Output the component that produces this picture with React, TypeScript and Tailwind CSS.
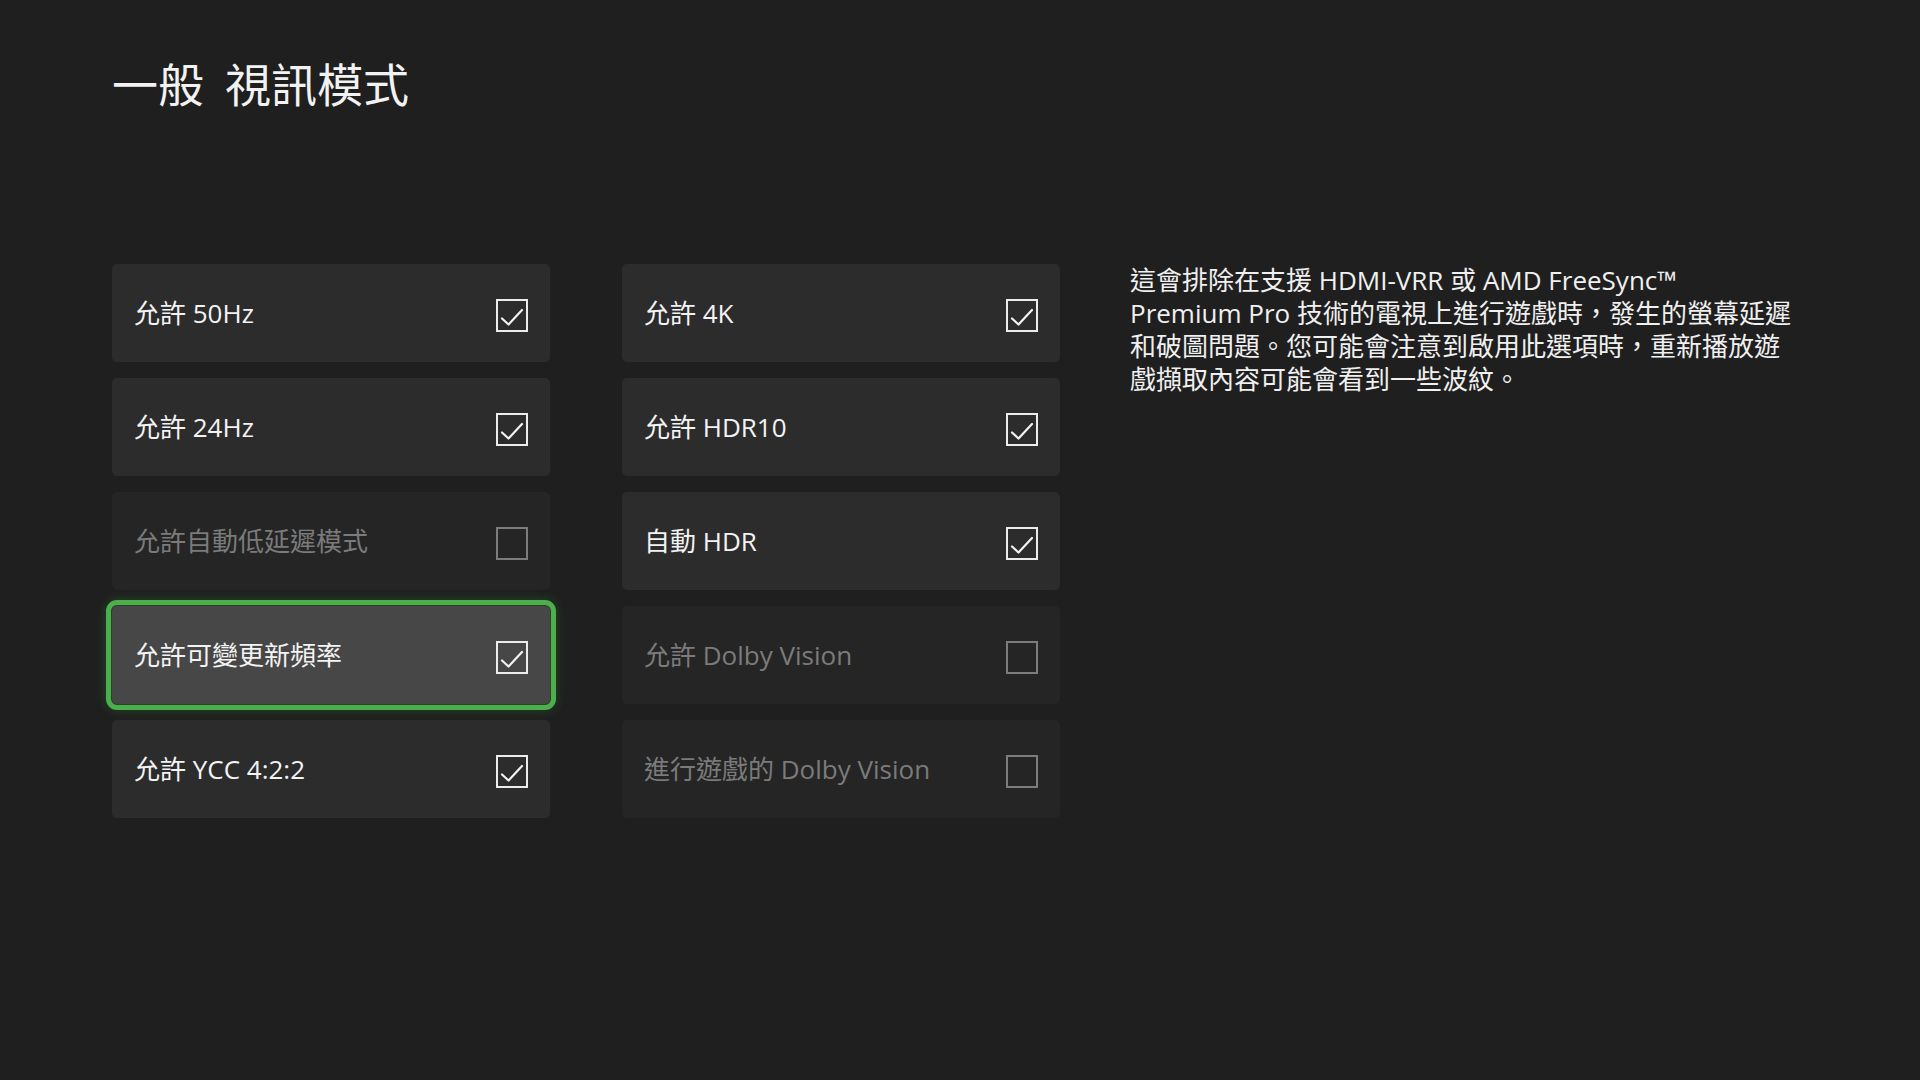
import React from 'react';

type Option = {
  label: string;
  checked: boolean;
  disabled?: boolean;
  focused?: boolean;
};

const LEFT: Option[] = [
  { label: '允許 50Hz', checked: true },
  { label: '允許 24Hz', checked: true },
  { label: '允許自動低延遲模式', checked: false, disabled: true },
  { label: '允許可變更新頻率', checked: true, focused: true },
  { label: '允許 YCC 4:2:2', checked: true },
];

const RIGHT: Option[] = [
  { label: '允許 4K', checked: true },
  { label: '允許 HDR10', checked: true },
  { label: '自動 HDR', checked: true },
  { label: '允許 Dolby Vision', checked: false, disabled: true },
  { label: '進行遊戲的 Dolby Vision', checked: false, disabled: true },
];

// description wraps exactly as on the console
const DESC_LINES = [
  '這會排除在支援 HDMI-VRR 或 AMD FreeSync™',
  'Premium Pro 技術的電視上進行遊戲時，發生的螢幕延遲',
  '和破圖問題。您可能會注意到啟用此選項時，重新播放遊',
  '戲擷取內容可能會看到一些波紋。',
];

function CheckBox({ checked, disabled }: { checked: boolean; disabled?: boolean }) {
  return (
    <svg width="32" height="33" viewBox="0 0 32 33" className="shrink-0 mt-1" aria-hidden="true">
      <rect
        x="1"
        y="1"
        width="30"
        height="31"
        fill="none"
        stroke={disabled ? '#7c7c7c' : '#ececec'}
        strokeWidth="2"
      />
      {checked && (
        <path d="M6 19.5 L12.5 25.5 L26 11" fill="none" stroke="#f2f2f2" strokeWidth="2.2" strokeLinecap="round" strokeLinejoin="round" />
      )}
    </svg>
  );
}

function Tile({ opt }: { opt: Option }) {
  const bg = opt.focused ? 'bg-[#474747]' : opt.disabled ? 'bg-[#252525]' : 'bg-[#2c2c2c]';
  const ring = opt.focused
    ? 'outline outline-[5px] outline-[#4caf4c] outline-offset-[1px] shadow-[0_0_12px_5px_rgba(50,140,50,0.45)]'
    : '';
  return (
    <div className={`h-[98px] rounded-[5px] flex items-center justify-between pl-[22px] pr-[22px] ${bg} ${ring}`}>
      <span className={`text-[26px] leading-none ${opt.disabled ? 'text-[#7b7b7b]' : 'text-[#f3f3f3]'}`}>
        {opt.label}
      </span>
      <CheckBox checked={opt.checked} disabled={opt.disabled} />
    </div>
  );
}

export default function App() {
  return (
    <div
      className="w-[1920px] h-[1080px] bg-[#1f1f1f] text-white overflow-hidden pl-[112px]"
      style={{ fontFamily: '"Open Sans", "Noto Sans CJK TC", sans-serif' }}
    >
      <h1 className="pt-[61px] text-[46px] leading-[46px] font-normal text-[#f2f2f2] flex">
        <span>一般</span>
        <span className="ml-[21px]">視訊模式</span>
      </h1>

      <div className="mt-[157px] flex items-start">
        <div className="w-[438px] flex flex-col gap-4">
          {LEFT.map(o => (
            <Tile key={o.label} opt={o} />
          ))}
        </div>
        <div className="w-[438px] ml-[72px] flex flex-col gap-4">
          {RIGHT.map(o => (
            <Tile key={o.label} opt={o} />
          ))}
        </div>
        <p className="ml-[70px] w-[720px] text-[26px] leading-[33px] text-[#f0f0f0] whitespace-nowrap">
          {DESC_LINES.map((line, i) => (
            <span key={i} className="block">
              {line}
            </span>
          ))}
        </p>
      </div>
    </div>
  );
}
